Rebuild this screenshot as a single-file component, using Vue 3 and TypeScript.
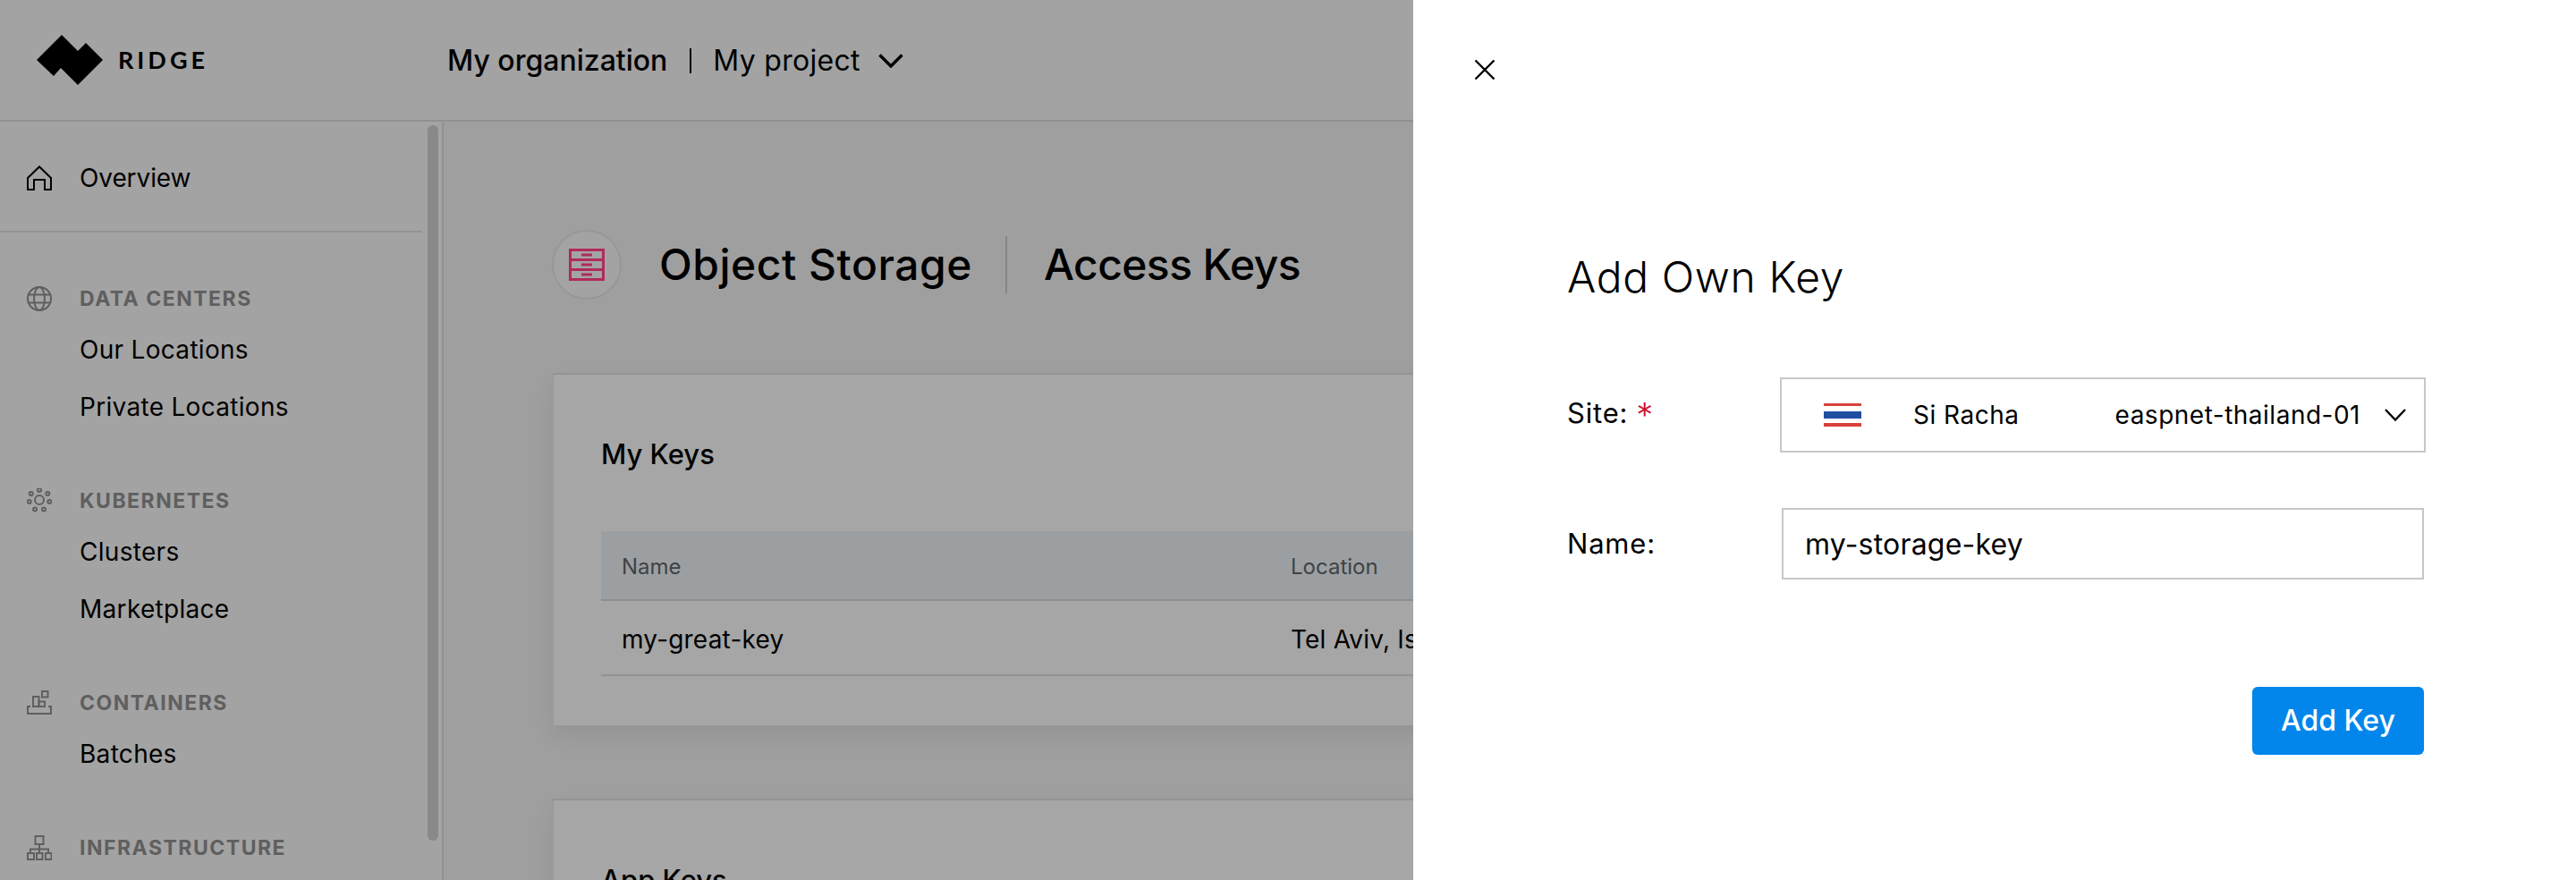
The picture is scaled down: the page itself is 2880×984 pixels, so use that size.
<script setup lang="ts">
interface Section { title: string; icon: string; items: string[] }
const sections: Section[] = [
  { title: 'DATA CENTERS', icon: 'globe', items: ['Our Locations', 'Private Locations'] },
  { title: 'KUBERNETES', icon: 'k8s', items: ['Clusters', 'Marketplace'] },
  { title: 'CONTAINERS', icon: 'box', items: ['Batches'] },
  { title: 'INFRASTRUCTURE', icon: 'tree', items: [] },
]
</script>

<template>
  <div class="screen">
    <div class="backdrop">
      <header class="topbar">
        <div class="brand">
          <svg class="logo" viewBox="0 0 76 58" width="76" height="58"><path d="M28 1 L0 29 L19 47 L27 38 L46 57 L74 29 L55 10 L46 19 Z" fill="#000"/></svg>
          <span class="brand-name">RIDGE</span>
        </div>
        <div class="org">
          <span class="org-name">My organization</span>
          <span class="org-sep"></span>
          <span class="project">My project</span>
          <svg class="org-chev" viewBox="0 0 28 16" width="28" height="16"><path d="M1.5 1.5 L14 14 L26.5 1.5" fill="none" stroke="#000" stroke-width="3.4"/></svg>
        </div>
      </header>
      <div class="body">
        <aside class="sidebar">
          <div class="overview">
            <div class="row">
              <svg class="ico" viewBox="0 0 28 28" width="28" height="28"><path d="M1 14 L14 1.5 L27 14 V27 H20 V16 H8 V27 H1 Z" fill="none" stroke="#000" stroke-width="2"/></svg>
              <span class="item-text">Overview</span>
            </div>
          </div>
          <div v-for="s in sections" :key="s.title" class="section">
            <div class="sec-title">
              <svg class="ico" viewBox="0 0 28 28" width="28" height="28" fill="none" stroke="#5f5f5f" stroke-width="2">
                <template v-if="s.icon === 'globe'">
                  <circle cx="14" cy="14" r="13"/><ellipse cx="14" cy="14" rx="6" ry="13"/><path d="M1 9.5 H27 M1 18.5 H27"/>
                </template>
                <template v-else-if="s.icon === 'k8s'">
                  <circle cx="14" cy="13" r="5"/><circle cx="14" cy="2" r="2"/><circle cx="4.7" cy="6" r="2"/><circle cx="23.3" cy="6" r="2"/><circle cx="2.7" cy="15" r="2"/><circle cx="25.3" cy="15" r="2"/><circle cx="9" cy="23.5" r="2"/><circle cx="19" cy="23.5" r="2"/>
                </template>
                <template v-else-if="s.icon === 'box'">
                  <path d="M1 17 V26 H27 V17 M1 18 H4 M24 18 H27"/><rect x="7" y="7" width="6.5" height="11"/><rect x="13.5" y="12.5" width="6.5" height="5.5"/><rect x="17" y="1" width="6.5" height="6.5"/>
                </template>
                <template v-else>
                  <rect x="9.5" y="1" width="9" height="9"/><rect x="1" y="20" width="7" height="7"/><rect x="11" y="20" width="6.5" height="7"/><rect x="21" y="20" width="6.5" height="7"/><path d="M14 10 V20 M4 20 V15.5 H24 V20"/>
                </template>
              </svg>
              <span class="sec-text">{{ s.title }}</span>
            </div>
            <div v-for="it in s.items" :key="it" class="item"><span class="item-text">{{ it }}</span></div>
          </div>
          <div class="scrollbar"></div>
        </aside>
        <main class="content">
          <div class="heading">
            <div class="disc">
              <svg viewBox="0 0 40 36" width="40" height="36" fill="none" stroke="#b02a5b" stroke-width="3">
                <rect x="1.5" y="1.5" width="37" height="33"/><path d="M1 12.5 H39 M1 23.5 H39"/><path d="M14 7 H26 M14 18 H26 M14 29 H26"/>
              </svg>
            </div>
            <h1 class="h-main">Object Storage</h1>
            <span class="h-sep"></span>
            <h1 class="h-sub">Access Keys</h1>
          </div>
          <section class="card">
            <h2 class="card-title">My Keys</h2>
            <div class="table">
              <div class="thead"><span>Name</span><span>Location</span></div>
              <div class="tbody"><span>my-great-key</span><span>Tel Aviv, Israel</span></div>
            </div>
          </section>
          <section class="card second">
            <h2 class="card-title">App Keys</h2>
          </section>
        </main>
      </div>
    </div>
    <aside class="panel">
      <svg class="close" viewBox="0 0 24 24" width="24" height="24"><path d="M1.5 1.5 L22.5 22.5 M22.5 1.5 L1.5 22.5" stroke="#000" stroke-width="2.4" fill="none"/></svg>
      <h2 class="panel-title">Add Own Key</h2>
      <div class="field site">
        <label class="label">Site:<span class="req">*</span></label>
        <div class="select">
          <svg class="flag" viewBox="0 0 42 26" width="42" height="26">
            <rect width="42" height="26" fill="#fff"/><rect width="42" height="3" fill="#d8413b"/><rect y="9" width="42" height="8" fill="#1f4fa0"/><rect y="22" width="42" height="4" fill="#d8413b"/>
          </svg>
          <span class="city">Si Racha</span>
          <span class="net">easpnet-thailand-01</span>
          <svg class="sel-chev" viewBox="0 0 24 14" width="24" height="14"><path d="M1 1 L12 12.5 L23 1" fill="none" stroke="#000" stroke-width="2.4"/></svg>
        </div>
      </div>
      <div class="field name">
        <label class="label">Name:</label>
        <div class="input">my-storage-key</div>
      </div>
      <div class="actions"><button class="btn" type="button">Add Key</button></div>
    </aside>
  </div>
</template>

<style>
html, body { margin: 0; background: #fff; }
</style>

<style scoped>
.screen { display: flex; width: 2880px; height: 984px; overflow: hidden; font-family: Inter, "Liberation Sans", sans-serif; color: #000; }
.backdrop { width: 1580px; flex: none; height: 984px; overflow: hidden; background: #a0a0a0; display: flex; flex-direction: column; }
.topbar { height: 134px; flex: none; display: flex; align-items: center; background: #a3a3a3; border-bottom: 2px solid #919191; }
.brand { display: flex; align-items: center; width: 500px; flex: none; padding-left: 41px; box-sizing: border-box; gap: 15px; }
.logo { display: block; }
.brand-name { font-family: Lato, sans-serif; font-weight: 700; font-size: 27px; letter-spacing: 4px; line-height: 30px; }
.org { display: flex; align-items: center; font-size: 32px; line-height: 40px; padding-top: 2px; }
.org-name { font-weight: 500; }
.org-sep { width: 2px; height: 28px; background: #000; margin: 0 24px 0 25px; }
.project { font-weight: 400; letter-spacing: .3px; }
.org-chev { margin-left: 20px; }
.body { flex: 1; display: flex; min-height: 0; }
.sidebar { position: relative; width: 496px; flex: none; box-sizing: border-box; border-right: 2px solid #919191; background: #a3a3a3; overflow: hidden; }
.overview { width: 472px; box-sizing: border-box; padding: 31px 0 27px; border-bottom: 2px solid #939393; }
.row { display: flex; align-items: center; height: 64px; padding-left: 30px; }
.ico { flex: none; display: block; }
.row .item-text { margin-left: 31px; letter-spacing: -.1px; }
.section { margin-top: 48px; }
.overview + .section { margin-top: 49px; }
.sec-title { display: flex; align-items: center; height: 50px; padding-left: 30px; }
.sec-text { margin-left: 31px; font-size: 23px; font-weight: 700; letter-spacing: 1.5px; color: #5f5f5f; }
.item { height: 64px; display: flex; align-items: center; padding-left: 89px; }
.item-text { font-size: 28px; letter-spacing: .3px; }
.scrollbar { position: absolute; left: 478px; top: 4px; width: 12px; height: 800px; border-radius: 6px; background: #888a89; }
.content { flex: 1; min-width: 0; padding: 121px 0 0 121px; overflow: hidden; background: #9f9f9f; }
.heading { display: flex; align-items: center; height: 78px; }
.disc { width: 78px; height: 78px; box-sizing: border-box; border: 2px solid #979797; border-radius: 50%; background: #a3a3a3; display: flex; align-items: center; justify-content: center; flex: none; }
.h-main, .h-sub { margin: 0; font-size: 48px; font-weight: 500; line-height: 60px; white-space: nowrap; }
.h-main { margin-left: 42px; letter-spacing: .5px; }
.h-sub { letter-spacing: -.6px; }
.h-sep { width: 2px; height: 64px; background: #858585; margin: 0 41px 0 37px; flex: none; }
.card { width: 1400px; box-sizing: border-box; margin-top: 82px; height: 394px; border-top: 2px solid #939393; border-left: 2px solid #999; background: #a6a6a6; box-shadow: 0 12px 24px rgba(0, 0, 0, .07); padding: 0 0 0 53px; }
.card-title { margin: 0; padding-top: 69px; font-size: 31px; font-weight: 500; line-height: 40px; }
.table { margin-top: 66px; }
.thead, .tbody { display: grid; grid-template-columns: 748px 1fr; box-sizing: border-box; padding-left: 23px; align-items: center; white-space: nowrap; }
.thead { height: 78px; background: #9c9fa2; border-bottom: 2px solid #8c8f91; font-size: 24px; color: #3f4244; padding-top: 2px; }
.tbody { height: 84px; border-bottom: 2px solid #939393; font-size: 28px; letter-spacing: .2px; padding-top: 4px; }
.panel { flex: 1; min-width: 0; background: #fff; padding: 66px 0 0 68px; box-sizing: border-box; }
.close { display: block; }
.panel-title { margin: 190px 0 0 104px; font-size: 48px; font-weight: 300; line-height: 60px; letter-spacing: .6px; }
.field { display: flex; align-items: center; margin-left: 104px; }
.site { margin-top: 82px; }
.name { margin-top: 62px; }
.label { width: 238px; flex: none; font-size: 31px; line-height: 40px; letter-spacing: .8px; display: flex; align-items: flex-start; }
.req { color: #d0122c; margin-left: 9px; font-size: 38px; font-weight: 300; line-height: 44px; }
.select { width: 722px; height: 84px; box-sizing: border-box; border: 2px solid #c4c8c8; display: flex; align-items: center; flex: none; font-size: 28px; letter-spacing: .5px; }
.flag { margin-left: 47px; flex: none; }
.city { margin-left: 58px; }
.net { margin-left: auto; }
.sel-chev { margin: 0 20px 0 27px; flex: none; }
.input { width: 718px; height: 80px; margin-left: 2px; box-sizing: border-box; border: 2px solid #c4c8c8; display: flex; align-items: center; padding-left: 24px; font-size: 32px; letter-spacing: .2px; flex: none; }
.actions { display: flex; justify-content: flex-end; width: 958px; margin: 120px 0 0 104px; }
.btn { width: 192px; height: 76px; border: 0; border-radius: 6px; background: #0286ec; color: #fff; font: 500 32px Inter, sans-serif; padding: 0 0 2px; }
</style>
